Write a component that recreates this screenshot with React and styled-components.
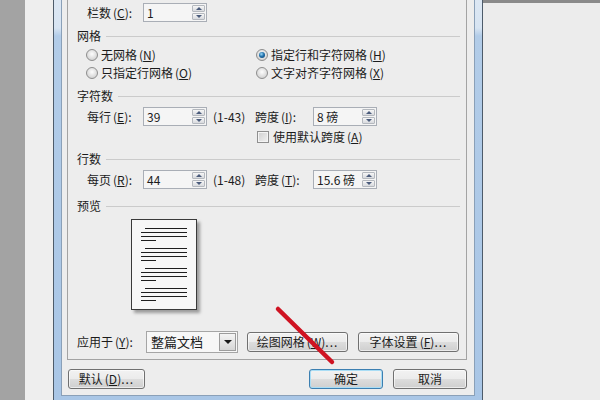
import styled, { createGlobalStyle } from "styled-components";

const GlobalStyle = createGlobalStyle`
  html, body {
    margin: 0;
    padding: 0;
  }
  body {
    background: #ececec;
    font-family: "Noto Sans CJK SC", "Liberation Sans", sans-serif;
    font-size: 12px;
    color: #1b1b1b;
  }
`;

const Screen = styled.div`
  position: relative;
  display: flex;
  width: 600px;
  height: 400px;
  overflow: hidden;
`;

const Gutter = styled.div`
  width: 25px;
  background: #a3a3a3;
`;

const PageEdge = styled.div`
  width: 28px;
  background: #eeeeee;
`;

const Desk = styled.div`
  flex: 1;
  background: #ececec;
  border-top: 3px solid #8a8a8a;
`;

/* aero frame around the dialog */
const Window = styled.div`
  width: 430px;
  height: 400px;
  box-sizing: border-box;
  border-left: 1px solid #4d5b6a;
  border-right: 1px solid #4d5b6a;
  padding: 0 7px 4px;
  background: linear-gradient(
    to bottom,
    #dce7f3 0,
    #d7e4f2 28px,
    #b2cce8 36px,
    #a9c6e6 100%
  );
`;

const Client = styled.div`
  height: 396px;
  box-sizing: border-box;
  border: 1px solid #8aa0b8;
  border-top: none;
  background: #ededed;
  padding: 0 7px 0 5px;
  display: flex;
  flex-direction: column;
`;

const TabPage = styled.div`
  border: 1px solid #a3a3a3;
  border-top: none;
  padding: 0 6px 6px 9px;
  display: flex;
  flex-direction: column;
`;

const GroupHead = styled.div`
  display: flex;
  align-items: center;
  height: 14px;
  line-height: 14px;
  margin-top: ${(p) => p.$mt}px;

  &::after {
    content: "";
    flex: 1;
    height: 1px;
    margin-left: 5px;
    background: #cbcbcb;
  }
`;

const Row = styled.div`
  display: flex;
  align-items: center;
  height: 19px;
  padding-left: ${(p) => p.$indent ?? 10}px;
  margin-top: ${(p) => p.$mt ?? 0}px;
`;

const Label = styled.span`
  flex: none;
  width: ${(p) => p.$w}px;
  margin-left: ${(p) => p.$ml ?? 0}px;
  line-height: 14px;
  white-space: nowrap;
`;

const Access = styled.span`
  margin-left: 2px;
`;

const Tail = styled.span`
  letter-spacing: 1px;
`;

const SpinBox = styled.div`
  flex: none;
  display: flex;
  width: 64px;
  height: 19px;
  box-sizing: border-box;
  padding: 1px;
  border: 1px solid #a9aeb6;
  background: #f5f5f5;
`;

const SpinValue = styled.span`
  flex: 1;
  padding-left: 2px;
  line-height: 15px;
  white-space: nowrap;
`;

const Spinner = styled.div`
  width: 13px;
  display: flex;
  flex-direction: column;
  gap: 1px;
`;

const SpinArrow = styled.div`
  flex: 1;
  display: flex;
  align-items: center;
  justify-content: center;
  border: 1px solid #b4b8be;
  border-radius: 1px;
  background: linear-gradient(#f6f6f6, #d8dade);

  &::before {
    content: "";
    border-left: 3px solid transparent;
    border-right: 3px solid transparent;
    ${(p) => (p.$down ? "border-top" : "border-bottom")}: 3px solid #4a5b7b;
  }
`;

const RadioGrid = styled.div`
  display: grid;
  grid-template-columns: 170px 1fr;
  grid-auto-rows: 18px;
  padding-left: 9px;
  margin-top: 3px;
`;

const Choice = styled.label`
  display: flex;
  align-items: center;
  line-height: 14px;
  white-space: nowrap;
`;

const RadioDot = styled.span`
  flex: none;
  display: inline-flex;
  align-items: center;
  justify-content: center;
  width: 12px;
  height: 12px;
  box-sizing: border-box;
  margin-right: 3px;
  border-radius: 50%;
  border: 1px solid #8d8d8d;
  background: radial-gradient(circle at 50% 40%, #fdfdfd 0, #d4d4d4 75%);

  &::after {
    content: "";
    width: 6px;
    height: 6px;
    border-radius: 50%;
    opacity: ${(p) => (p.$on ? 1 : 0)};
    background: radial-gradient(
      circle at 40% 35%,
      #9ad8f8 0,
      #2272ac 45%,
      #0b3a66 100%
    );
  }
`;

const CheckSquare = styled.span`
  flex: none;
  width: 12px;
  height: 12px;
  box-sizing: border-box;
  margin: 0 4px 0 170px;
  border: 1px solid #8f8f8f;
  box-shadow: inset 0 0 0 1px #f4f4f4;
  background: linear-gradient(135deg, #cfcfcf, #f2f2f2);
`;

const Sheet = styled.div`
  width: 66px;
  height: 91px;
  box-sizing: border-box;
  margin: 6px 0 0 54px;
  padding: 8px 9px;
  border: 1px solid #3a3a3a;
  background: #f7f7f7;
  box-shadow: 3px 3px 3px rgba(0, 0, 0, 0.35);
  display: flex;
  flex-direction: column;
  gap: 7px;
`;

const Para = styled.div`
  display: flex;
  flex-direction: column;
  gap: 3px;
`;

const TextLine = styled.div`
  height: 1px;
  background: #1e1e1e;
  margin-left: ${(p) => (p.$indent ? 4 : 0)}px;
  width: ${(p) => (p.$short ? "15px" : "auto")};
`;

const ApplyRow = styled.div`
  display: flex;
  align-items: center;
  height: 22px;
  margin-top: 21px;
`;

const Combo = styled.div`
  flex: none;
  display: flex;
  width: 92px;
  height: 22px;
  box-sizing: border-box;
  padding: 1px;
  border: 1px solid #a5a5a5;
  background: #f7f7f7;
`;

const ComboText = styled.span`
  flex: 1;
  padding-left: 3px;
  line-height: 18px;
  font-size: 13px;
`;

const ComboDrop = styled.div`
  width: 15px;
  display: flex;
  align-items: center;
  justify-content: center;
  border: 1px solid #9c9c9c;
  background: linear-gradient(#f4f4f4, #d6d6d6);

  &::before {
    content: "";
    border-left: 4px solid transparent;
    border-right: 4px solid transparent;
    border-top: 4px solid #1a1a1a;
  }
`;

const Button = styled.button`
  flex: none;
  width: ${(p) => p.$w}px;
  height: 20px;
  margin-left: ${(p) => p.$ml ?? 0}px;
  padding: 0;
  border: 1px solid ${(p) => (p.$primary ? "#3c7fb1" : "#707070")};
  border-radius: 3px;
  box-shadow: inset 0 0 0 1px
    ${(p) => (p.$primary ? "#a9ddf5" : "rgba(255, 255, 255, 0.6)")};
  background: linear-gradient(
    #f2f2f2 0%,
    #ebebeb 50%,
    #dddddd 51%,
    #cfcfcf 100%
  );
  font: inherit;
  line-height: 16px;
  color: #1b1b1b;
  white-space: nowrap;
`;

const ButtonRow = styled.div`
  display: flex;
  justify-content: space-between;
  margin-top: 9px;
  padding-left: 1px;
`;

const ButtonGroup = styled.div`
  display: flex;
  gap: 10px;
`;

const Marker = styled.svg`
  position: absolute;
  inset: 0;
  pointer-events: none;
`;

const Spin = ({ value }) => (
  <SpinBox>
    <SpinValue>{value}</SpinValue>
    <Spinner>
      <SpinArrow />
      <SpinArrow $down />
    </Spinner>
  </SpinBox>
);

// label text followed by its access key, e.g. 栏数 (C):
const Key = ({ label, k, tail = ":" }) => (
  <>
    {label}
    <Access>
      (<u>{k}</u>)
    </Access>
    <Tail>{tail}</Tail>
  </>
);

const pageLayout = [0, 1, 2, 3];

export default function App() {
  return (
    <>
      <GlobalStyle />
      <Screen>
        <Gutter />
        <PageEdge />
        <Window>
          <Client>
            <TabPage>
              <Row $mt={3}>
                <Label $w={56}>
                  <Key label="栏数" k="C" />
                </Label>
                <Spin value="1" />
              </Row>

              <GroupHead $mt={7}>网格</GroupHead>
              <RadioGrid>
                <Choice>
                  <RadioDot />
                  <Key label="无网格" k="N" tail="" />
                </Choice>
                <Choice>
                  <RadioDot $on />
                  <Key label="指定行和字符网格" k="H" tail="" />
                </Choice>
                <Choice>
                  <RadioDot />
                  <Key label="只指定行网格" k="O" tail="" />
                </Choice>
                <Choice>
                  <RadioDot />
                  <Key label="文字对齐字符网格" k="X" tail="" />
                </Choice>
              </RadioGrid>

              <GroupHead $mt={7}>字符数</GroupHead>
              <Row $mt={4}>
                <Label $w={56}>
                  <Key label="每行" k="E" />
                </Label>
                <Spin value="39" />
                <Label $w={42} $ml={6}>
                  (1-43)
                </Label>
                <Label $w={58}>
                  <Key label="跨度" k="I" />
                </Label>
                <Spin value="8 磅" />
              </Row>
              <Row $mt={1}>
                <CheckSquare />
                <Label>
                  <Key label="使用默认跨度" k="A" tail="" />
                </Label>
              </Row>

              <GroupHead $mt={6}>行数</GroupHead>
              <Row $mt={4}>
                <Label $w={56}>
                  <Key label="每页" k="R" />
                </Label>
                <Spin value="44" />
                <Label $w={42} $ml={6}>
                  (1-48)
                </Label>
                <Label $w={58}>
                  <Key label="跨度" k="T" />
                </Label>
                <Spin value="15.6 磅" />
              </Row>

              <GroupHead $mt={10}>预览</GroupHead>
              <Sheet>
                {pageLayout.map((n) => (
                  <Para key={n}>
                    <TextLine $indent />
                    <TextLine />
                    <TextLine />
                    <TextLine $short />
                  </Para>
                ))}
              </Sheet>

              <ApplyRow>
                <Label $w={69}>
                  <Key label="应用于" k="Y" />
                </Label>
                <Combo>
                  <ComboText>整篇文档</ComboText>
                  <ComboDrop />
                </Combo>
                <Button $w={101} $ml={9}>
                  <Key label="绘图网格" k="W" tail="..." />
                </Button>
                <Button $w={101} $ml={10}>
                  <Key label="字体设置" k="F" tail="..." />
                </Button>
              </ApplyRow>
            </TabPage>

            <ButtonRow>
              <Button $w={77}>
                <Key label="默认" k="D" tail="..." />
              </Button>
              <ButtonGroup>
                <Button $w={74} $primary>
                  确定
                </Button>
                <Button $w={74}>取消</Button>
              </ButtonGroup>
            </ButtonRow>
          </Client>
        </Window>
        <Desk />
        <Marker width="600" height="400" viewBox="0 0 600 400">
          <line
            x1="278"
            y1="309"
            x2="332"
            y2="362"
            stroke="#cf1322"
            strokeWidth="4.5"
            strokeLinecap="round"
          />
        </Marker>
      </Screen>
    </>
  );
}
